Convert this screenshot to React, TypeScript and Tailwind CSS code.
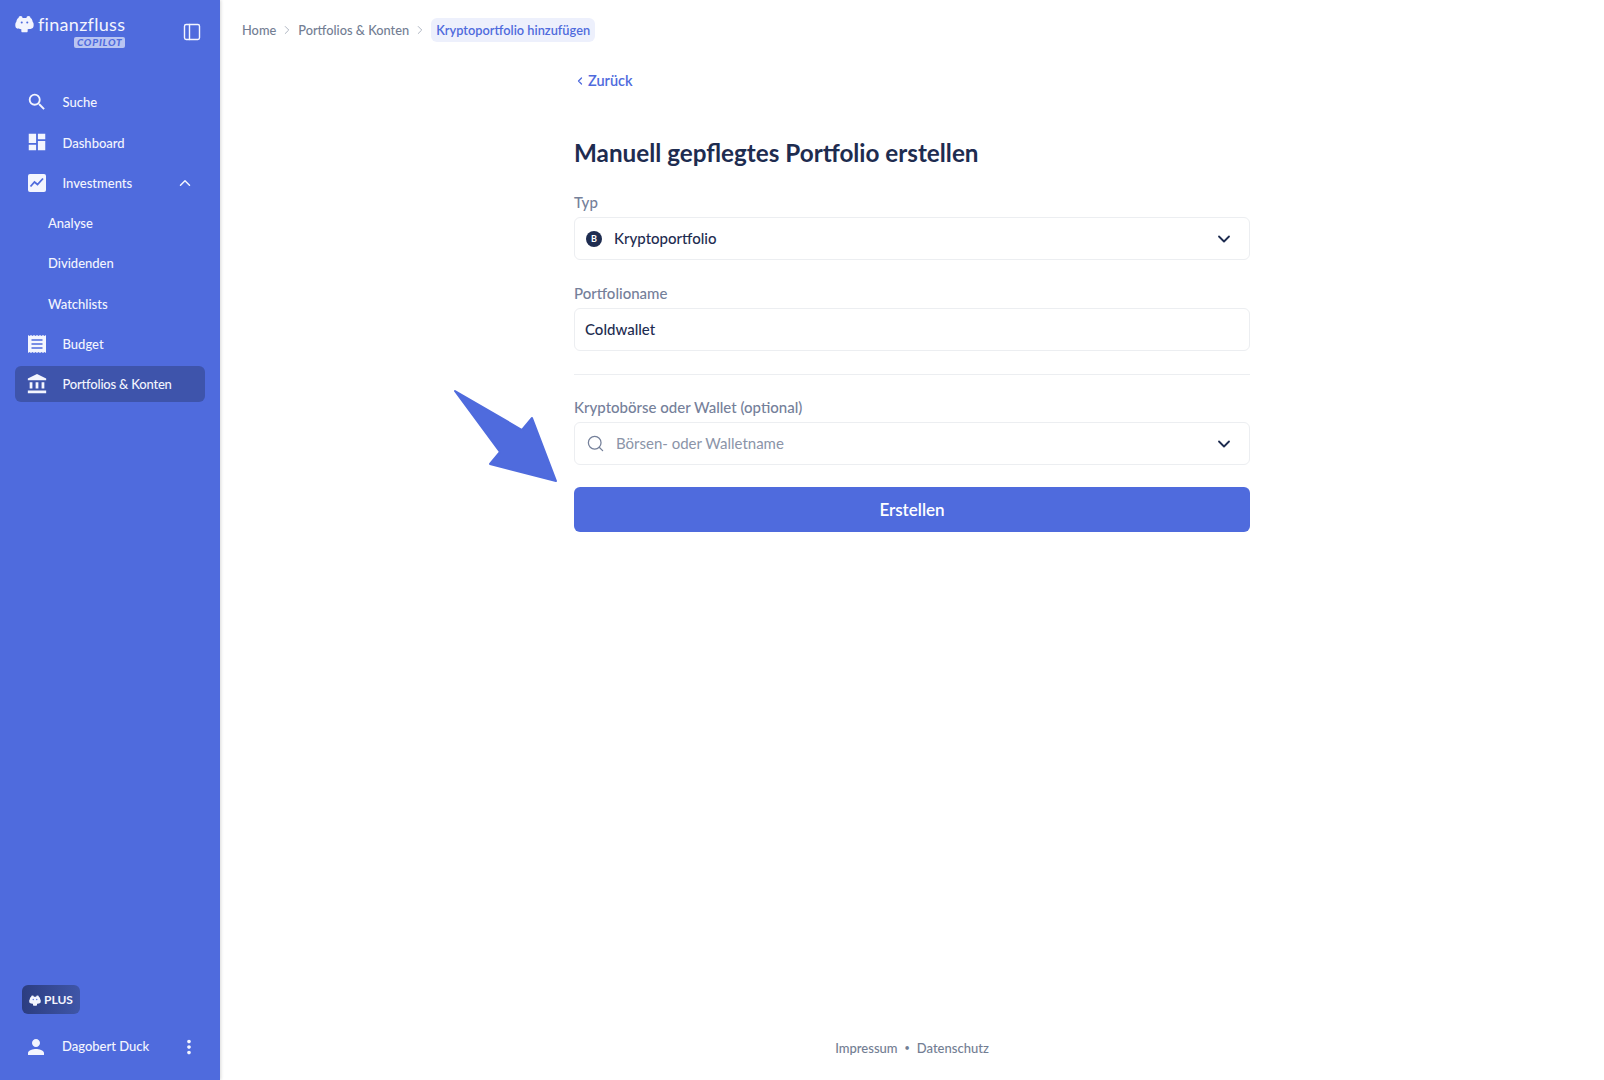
import type { ReactNode } from "react";
import { MdAccountBalance, MdDashboard, MdMoreVert, MdPerson, MdSearch } from "react-icons/md";
import { ChevronDown, ChevronLeft, ChevronRight, ChevronUp, PanelLeft, Search } from "lucide-react";

function Hippo({ className }: { className?: string }) {
  return (
    <svg viewBox="0 0 24 22" className={className} fill="currentColor">
      <circle cx="7" cy="3.4" r="2.6" />
      <circle cx="17" cy="3.4" r="2.6" />
      <path d="M5 3.5h14c2 0 3 2.4 3.4 5 1.6.8 1.6 6.500 0 7.500-1.200 1-4.400 1.500-6.400 1.500v2.500c0 1-1 1.500-2 1.500h-4c-1 0-2-.5-2-1.500v-2.500c-2 0-5.200-.5-6.400-1.500-1.600-1-1.600-6.700 0-7.500C2 5.900 3 3.500 5 3.500z" />
      <circle cx="8.500" cy="9" r="1.300" fill="#4f6bdd" />
      <circle cx="15.500" cy="9" r="1.300" fill="#4f6bdd" />
    </svg>
  );
}

function ChartBox() {
  return (
    <svg viewBox="0 0 18 18" className="h-[18px] w-[18px]">
      <rect width="18" height="18" rx="2" fill="currentColor" />
      <path d="M2.500 12.500 6.500 8l3 2.500 5.500-6" fill="none" stroke="#4f6bdd" strokeWidth="1.800" />
    </svg>
  );
}

function ReceiptIcon() {
  return (
    <svg viewBox="0 0 18 18" className="h-[18px] w-[18px]">
      <path d="M0 0l1.500 1L3 0l1.500 1L6 0l1.500 1L9 0l1.500 1L12 0l1.500 1L15 0l1.500 1L18 0v18l-1.500-1-1.500 1-1.500-1-1.500 1-1.500-1L9 18l-1.500-1L6 18l-1.500-1L3 18l-1.500-1L0 18z" fill="currentColor" />
      <path d="M3.500 5h11M3.500 9h11M3.500 13h11" stroke="#4f6bdd" strokeWidth="1.400" />
    </svg>
  );
}

function BankIcon() {
  return <MdAccountBalance className="h-[22px] w-[22px] -mx-[2px]" />;
}

function NavRow({ icon, label, active, trailing }: { icon?: ReactNode; label: string; active?: boolean; trailing?: ReactNode }) {
  return (
    <div className={`flex h-9 items-center rounded-md ${active ? "bg-[#3e54ab] tracking-[-0.2px]" : ""} ${icon ? "pl-[13px]" : "pl-[33px]"} pr-[11px]`}>
      {icon && <span className="flex w-[34.500px] shrink-0 items-center">{icon}</span>}
      <span className="pt-[2px] text-[13px] font-medium">{label}</span>
      {trailing && <span className="ml-auto">{trailing}</span>}
    </div>
  );
}

function Sidebar() {
  return (
    <aside className="flex h-screen w-[220px] shrink-0 flex-col bg-[#4f6bdd] px-[15px] text-[#f3f5fe] shadow-[1px_0_3px_rgba(0,0,0,0.15)]">
      <div className="flex h-[84px] items-start pt-[14px]">
        <div className="relative flex items-center">
          <Hippo className="h-[18px] w-[19px]" />
          <span className="ml-1 text-[18px] leading-5 tracking-[0.3px]">finanzfluss</span>
          <span className="absolute left-[59px] top-[23px] rounded-[2px] bg-[#b9c5f2] px-[3px] text-[10px] leading-[11px] font-black tracking-[0.8px] text-[#4f6bdd] italic">COPILOT</span>
        </div>
        <PanelLeft className="ml-auto mr-[3px] mt-[8px] h-[20px] w-[20px]" strokeWidth={1.700} />
      </div>
      <nav className="flex flex-col gap-[4.300px]">
        <NavRow icon={<MdSearch className="-ml-[2px] h-[22px] w-[22px]" />} label="Suche" />
        <NavRow icon={<MdDashboard className="-ml-[2px] h-[22px] w-[22px]" />} label="Dashboard" />
        <NavRow icon={<ChartBox />} label="Investments" trailing={<ChevronUp className="h-[18px] w-[18px]" strokeWidth={2} />} />
        <NavRow label="Analyse" />
        <NavRow label="Dividenden" />
        <NavRow label="Watchlists" />
        <NavRow icon={<ReceiptIcon />} label="Budget" />
        <NavRow active icon={<BankIcon />} label="Portfolios & Konten" />
      </nav>
      <div className="mt-auto pb-[15px]">
        <div className="ml-[7px] flex h-[29px] w-[58px] items-center justify-center gap-[3px] rounded-md bg-gradient-to-r from-[#2c3d80] to-[#3f56a8] pt-[1px] text-[12px] font-bold">
          <Hippo className="h-[11px] w-[12px]" />
          PLUS
        </div>
        <div className="mt-[15px] flex h-9 items-center pl-[9px] pr-[5px]">
          <span className="flex w-[38px] shrink-0"><MdPerson className="h-[24px] w-[24px]" /></span>
          <span className="text-[13px] font-medium">Dagobert Duck</span>
          <MdMoreVert className="ml-auto h-[22px] w-[22px]" />
        </div>
      </div>
    </aside>
  );
}

function Field({ label, children }: { label: string; children: ReactNode }) {
  return (
    <div>
      <div className="mb-[6px] pt-[1px] text-[15px] leading-[18px] font-medium text-[#75809a]">{label}</div>
      <div className="flex h-[43px] items-center rounded-md border border-[#eceef1] pl-[10px] pr-[15px] text-[15px] font-medium text-[#1e2c50]">
        {children}
      </div>
    </div>
  );
}

function App() {
  return (
    <div className="flex h-screen overflow-hidden bg-white font-['Lato','Liberation_Sans',sans-serif]">
      <Sidebar />
      <main className="flex min-w-0 flex-1 flex-col">
        <div className="flex h-[60px] items-center pl-[22px] text-[12.800px] font-medium text-[#737e93]">
          <span className="pt-[1px]">Home</span>
          <ChevronRight className="mx-[4px] h-[14px] w-[14px] text-[#a3abb9]" strokeWidth={1.500} />
          <span className="pt-[1px]">Portfolios &amp; Konten</span>
          <ChevronRight className="mx-[4px] h-[14px] w-[14px] text-[#a3abb9]" strokeWidth={1.500} />
          <span className="rounded-md bg-[#edf0fc] px-[5px] py-[3px] leading-[18px] font-semibold text-[#4f6bdd]">Kryptoportfolio hinzufügen</span>
        </div>
        <div className="relative mx-auto w-[676px]">
          <div className="flex h-[42px] items-center text-[14.500px] font-semibold text-[#4f6bdd]">
            <ChevronLeft className="mr-[2px] h-[12px] w-[12px]" strokeWidth={2.500} />
            Zurück
          </div>
          <h1 className="mt-[34px] text-[24.250px] leading-[34px] font-bold text-[#1e2c50]">Manuell gepflegtes Portfolio erstellen</h1>
          <div className="mt-[22px] flex flex-col gap-[23px]">
            <Field label="Typ">
              <span className="ml-[1px] mr-[12px] flex h-4 w-4 items-center justify-center rounded-full bg-[#1e2c50] text-[9px] font-bold text-white">B</span>
              Kryptoportfolio
              <ChevronDown className="ml-auto h-[20px] w-[20px]" strokeWidth={2.200} />
            </Field>
            <Field label="Portfolioname">Coldwallet</Field>
          </div>
          <hr className="mt-[23px] border-[#eceef1]" />
          <div className="mt-[22px]">
            <Field label="Kryptobörse oder Wallet (optional)">
              <Search className="mr-[11px] ml-[1px] h-[19px] w-[19px] text-[#75809a]" strokeWidth={1.600} />
              <span className="font-normal text-[#8b94a8]">Börsen- oder Walletname</span>
              <ChevronDown className="ml-auto h-[20px] w-[20px]" strokeWidth={2.200} />
            </Field>
          </div>
          <button className="mt-[22px] flex h-[45px] w-full items-center justify-center rounded-md bg-[#4f6bdd] text-[17px] font-semibold text-white">Erstellen</button>
          <svg className="absolute -left-[120px] top-[329px] h-[100px] w-[110px]" viewBox="0 0 110 100">
            <path d="M1 2 68 41 78 29 102 92 36 75 46 63z" fill="#4f6bdd" stroke="#4f6bdd" strokeWidth="2" strokeLinejoin="round" />
          </svg>
        </div>
        <footer className="mt-auto flex h-[66px] items-start justify-center gap-[7px] pt-[25px] text-[13px] font-medium text-[#737e93]">
          <span>Impressum</span>
          <span className="text-[9px] leading-[18px]">•</span>
          <span>Datenschutz</span>
        </footer>
      </main>
    </div>
  );
}

export default App;
